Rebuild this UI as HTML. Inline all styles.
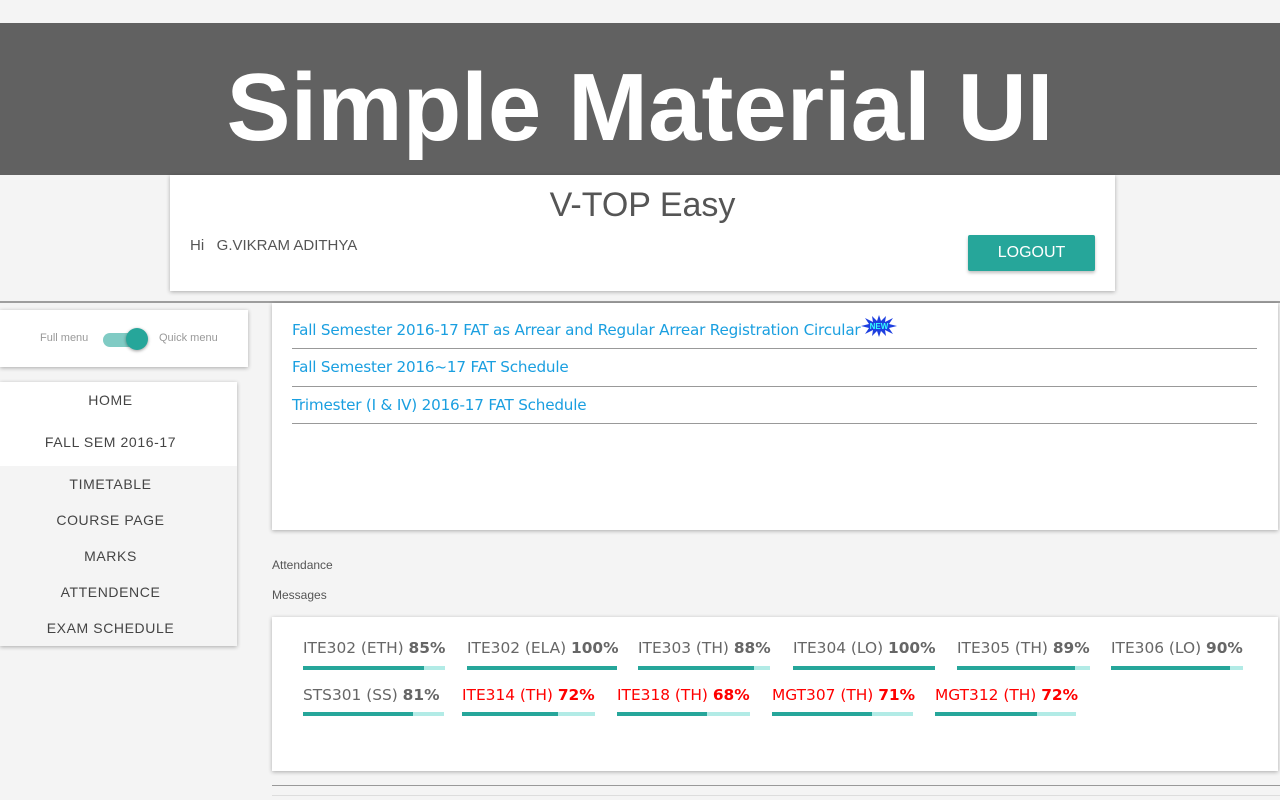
<!DOCTYPE html>
<html><head><style>
*{margin:0;padding:0;box-sizing:border-box}
body{width:1280px;height:800px;overflow:hidden;background:#f4f4f4;font-family:"Liberation Sans",Arial,sans-serif;position:relative}
.abs{position:absolute}
.band{left:0;top:23px;width:1280px;height:152px;background:#616161;color:#fff;font-weight:bold;font-size:96px;text-align:center;line-height:170px;overflow:hidden}
.card{background:#fff;box-shadow:0 1px 4px rgba(0,0,0,.3)}
.ann{font-family:"DejaVu Sans",Verdana,sans-serif;font-size:15.2px;color:#1a9fe0;left:292px;letter-spacing:-0.2px}
.hr{left:292px;width:965px;height:1px;background:#999}
.menu{font-size:14px;color:#444;text-align:center;letter-spacing:0.6px;width:221px;left:0}
.it{font-family:"DejaVu Sans",Verdana,sans-serif;font-size:15.4px;color:#666;white-space:nowrap;letter-spacing:0}
.it b{color:#666}
.red{color:#f00}.red b{color:#f00}
.bar{height:4px;background:#b2ebe6}
.bar i{display:block;height:4px;background:#26a69a}
</style></head><body>
<div class="abs band">Simple Material UI</div>
<div class="abs card" style="left:170px;top:175px;width:945px;height:116px"></div>
<div class="abs" style="left:170px;top:186px;width:945px;text-align:center;font-size:34px;color:#555">V-TOP Easy</div>
<div class="abs" style="left:190px;top:237px;font-size:15px;color:#555">Hi &nbsp;&nbsp;G.VIKRAM ADITHYA</div>
<div class="abs" style="left:968px;top:235px;width:127px;height:36px;background:#26a69a;color:#fff;font-size:16px;text-align:center;line-height:36px;border-radius:2px;box-shadow:0 2px 3px rgba(0,0,0,.25)">LOGOUT</div>
<div class="abs" style="left:0;top:301px;width:1280px;height:2px;background:#9e9e9e"></div>

<div class="abs card" style="left:0;top:310px;width:248px;height:57px"></div>
<div class="abs" style="left:40px;top:332px;font-size:11px;color:#999">Full menu</div>
<div class="abs" style="left:103px;top:333px;width:44px;height:14px;border-radius:7px;background:#80cbc4"></div>
<div class="abs" style="left:126px;top:328px;width:22px;height:22px;border-radius:50%;background:#26a69a;box-shadow:0 1px 3px rgba(0,0,0,.4)"></div>
<div class="abs" style="left:159px;top:332px;font-size:11px;color:#999">Quick menu</div>

<div class="abs card" style="left:0;top:382px;width:237px;height:264px;background:#f4f4f4"></div>
<div class="abs" style="left:0;top:382px;width:237px;height:84px;background:#fff"></div>
<div class="abs menu" style="top:392px">HOME</div>
<div class="abs menu" style="top:434px">FALL SEM 2016-17</div>
<div class="abs menu" style="top:476px">TIMETABLE</div>
<div class="abs menu" style="top:512px">COURSE PAGE</div>
<div class="abs menu" style="top:548px">MARKS</div>
<div class="abs menu" style="top:584px">ATTENDENCE</div>
<div class="abs menu" style="top:620px">EXAM SCHEDULE</div>

<div class="abs card" style="left:272px;top:303px;width:1006px;height:227px"></div>
<div class="abs ann" style="top:321px">Fall Semester 2016-17 FAT as Arrear and Regular Arrear Registration Circular</div>
<svg class="abs" style="left:861px;top:315px" width="36" height="22" viewBox="0 0 36 22"><polygon points="18,0 20,6 25,1 24,7 32,3 28,9 36,11 28,13 32,19 24,15 25,21 20,16 18,22 16,16 11,21 12,15 4,19 8,13 0,11 8,9 4,3 12,7 11,1 16,6" fill="#1d3fe0"/><text x="18" y="14" font-size="8" font-weight="bold" fill="#3ff" text-anchor="middle" font-family="Liberation Sans">NEW</text></svg>
<div class="abs hr" style="top:348px"></div>
<div class="abs ann" style="top:358px">Fall Semester 2016~17 FAT Schedule</div>
<div class="abs hr" style="top:386px"></div>
<div class="abs ann" style="top:396px">Trimester (I &amp; IV) 2016-17 FAT Schedule</div>
<div class="abs hr" style="top:423px"></div>

<div class="abs" style="left:272px;top:558px;font-size:12px;color:#555">Attendance</div>
<div class="abs" style="left:272px;top:588px;font-size:12px;color:#555">Messages</div>

<div class="abs card" style="left:272px;top:617px;width:1006px;height:154px"></div>

<div class="abs it" style="left:303px;top:639px">ITE302 (ETH) <b>85%</b></div>
<div class="abs bar" style="left:303px;top:666px;width:142px"><i style="width:85%"></i></div>
<div class="abs it" style="left:467px;top:639px">ITE302 (ELA) <b>100%</b></div>
<div class="abs bar" style="left:467px;top:666px;width:150px"><i style="width:100%"></i></div>
<div class="abs it" style="left:638px;top:639px">ITE303 (TH) <b>88%</b></div>
<div class="abs bar" style="left:638px;top:666px;width:132px"><i style="width:88%"></i></div>
<div class="abs it" style="left:793px;top:639px">ITE304 (LO) <b>100%</b></div>
<div class="abs bar" style="left:793px;top:666px;width:142px"><i style="width:100%"></i></div>
<div class="abs it" style="left:957px;top:639px">ITE305 (TH) <b>89%</b></div>
<div class="abs bar" style="left:957px;top:666px;width:133px"><i style="width:89%"></i></div>
<div class="abs it" style="left:1111px;top:639px">ITE306 (LO) <b>90%</b></div>
<div class="abs bar" style="left:1111px;top:666px;width:132px"><i style="width:90%"></i></div>

<div class="abs it" style="left:303px;top:686px">STS301 (SS) <b>81%</b></div>
<div class="abs bar" style="left:303px;top:712px;width:141px"><i style="width:78%"></i></div>
<div class="abs it red" style="left:462px;top:686px">ITE314 (TH) <b>72%</b></div>
<div class="abs bar" style="left:462px;top:712px;width:133px"><i style="width:72%"></i></div>
<div class="abs it red" style="left:617px;top:686px">ITE318 (TH) <b>68%</b></div>
<div class="abs bar" style="left:617px;top:712px;width:133px"><i style="width:68%"></i></div>
<div class="abs it red" style="left:772px;top:686px">MGT307 (TH) <b>71%</b></div>
<div class="abs bar" style="left:772px;top:712px;width:141px"><i style="width:71%"></i></div>
<div class="abs it red" style="left:935px;top:686px">MGT312 (TH) <b>72%</b></div>
<div class="abs bar" style="left:935px;top:712px;width:141px"><i style="width:72%"></i></div>

<div class="abs" style="left:272px;top:785px;width:1008px;height:1px;background:#999"></div>
<div class="abs" style="left:272px;top:795px;width:1008px;height:1px;background:#ddd"></div>
</body></html>
